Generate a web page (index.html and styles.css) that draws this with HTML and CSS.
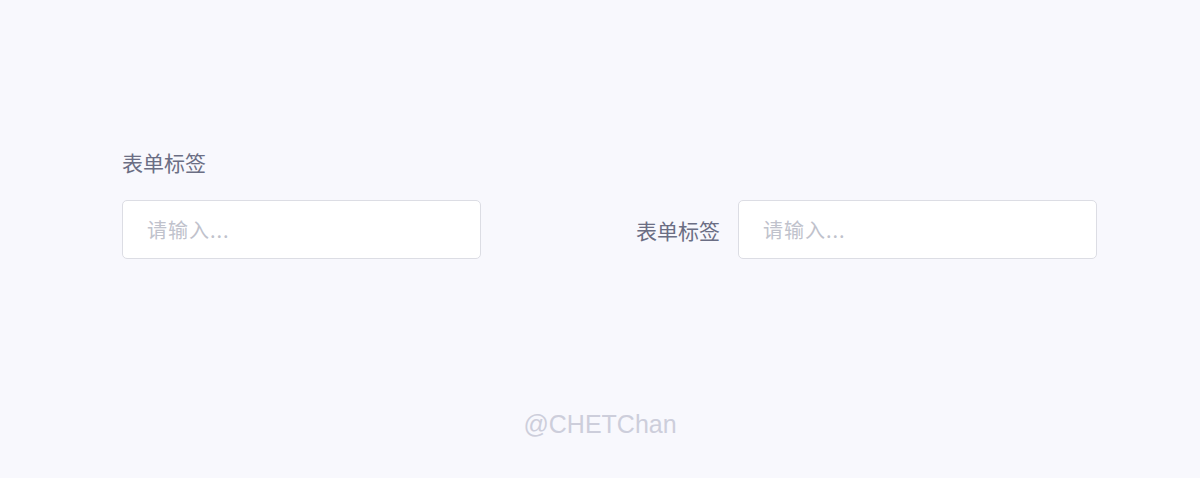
FILE: index.html
```html
<!DOCTYPE html>
<html lang="zh-CN">
<head>
	<meta charset="utf-8">
	<title>表单标签</title>
	<link rel="stylesheet" href="styles.css">
</head>
<body>
	<div class="main">
		<div class="forms">
			<div class="field field_top">
				<label for="name_top">表单标签</label>
				<input type="text" id="name_top" placeholder="请输入..." />
			</div>
			<div class="field field_side">
				<label for="name_side">表单标签</label>
				<input type="text" id="name_side" placeholder="请输入..." />
			</div>
		</div>
		<div class="credit">@CHETChan</div>
	</div>
</body>
</html>
```

FILE: styles.css
```css
html, body {
	margin: 0;
	padding: 0;
	background: #f8f8fd;
}
body {
	font-family: "Noto Sans CJK SC", "Noto Sans", sans-serif;
	width: 1200px;
	height: 478px;
	overflow: hidden;
}
.main {
	box-sizing: border-box;
	height: 478px;
	display: flex;
	flex-direction: column;
}
.forms {
	display: flex;
	justify-content: space-between;
	align-items: flex-end;
	padding: 147px 103px 0 122px;
}
.field label {
	font-size: 21px;
	line-height: 30px;
	color: #6b6e84;
}
.field input {
	box-sizing: border-box;
	width: 359px;
	height: 59px;
	padding: 0 24px;
	border: 1px solid #dcdde4;
	border-radius: 5px;
	background: #fff;
	font-family: inherit;
	font-size: 20px;
	color: #6b6e84;
	outline: none;
}
.field input::placeholder {
	color: #c0c2cc;
	letter-spacing: 1px;
}
.field_top {
	display: flex;
	flex-direction: column;
	gap: 23px;
}
.field_side {
	display: flex;
	align-items: center;
	gap: 18px;
}
.credit {
	margin-top: auto;
	margin-bottom: 39px;
	text-align: center;
	font-family: "Liberation Sans", Arial, sans-serif;
	font-size: 25px;
	color: #cdcedb;
}
```
